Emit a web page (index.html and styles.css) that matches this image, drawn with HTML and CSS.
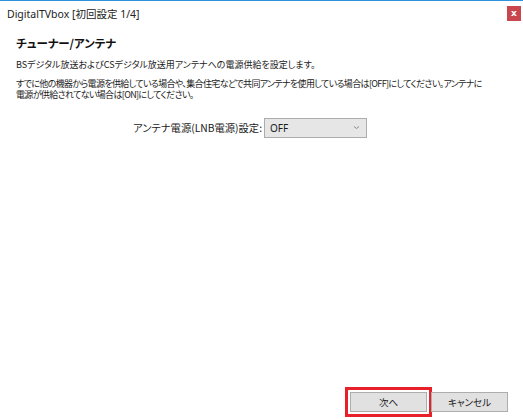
FILE: index.html
```html
<!DOCTYPE html>
<html>
<head>
    <meta charset="utf-8">
    <link rel="stylesheet" href="styles.css">
</head>
<body>
    <div class="window">
        <div class="titlebar">
            <span class="title">DigitalTVbox [初回設定 1/4]</span>
            <span class="close">x</span>
        </div>

        <div class="content">
            <h1 class="heading">チューナー/アンテナ</h1>
            <p class="text">BSデジタル放送およびCSデジタル放送用アンテナへの電源供給を設定します。</p>
            <p class="text text-gap">すでに他の機器から電源を供給している場合や、集合住宅などで共同アンテナを使用している場合は[OFF]にしてください。アンテナに<br>電源が供給されてない場合は[ON]にしてください。</p>

            <div class="setting">
                <label class="setting-label" for="lnb">アンテナ電源(LNB電源)設定:</label>
                <div class="combo" id="lnb">
                    <span>OFF</span>
                    <svg class="chevron" width="7" height="5" viewBox="0 0 7 5">
                        <path d="M1 1.5 L3.5 3.5 L6 1.5" fill="none" stroke="#8a8a8a" stroke-width="1"/>
                    </svg>
                </div>
            </div>
        </div>

        <!-- bottom buttons -->
        <div class="footer">
            <button class="btn btn-marked">次へ</button>
            <button class="btn">キャンセル</button>
        </div>
    </div>
</body>
</html>
```

FILE: styles.css
```css
body {
    margin: 0;
    padding: 0;
    background-color: white;
    font-family: "Noto Sans", "Noto Sans CJK JP", sans-serif;
    color: #1a1a1a;
}

.window {
    width: 523px;
    height: 420px;
    display: flex;
    flex-direction: column;
    box-sizing: border-box;
}

.titlebar {
    height: 25px;
    border-top: 1px solid #2f92dc;
    box-sizing: border-box;
    display: flex;
    align-items: center;
    justify-content: space-between;
    padding-left: 7px;
    padding-right: 2px;
}

.title {
    font-size: 10.5px;
    color: #222;
}

.close {
    width: 14px;
    height: 15px;
    background-color: #c9464f;
    color: white;
    font-size: 9px;
    font-weight: bold;
    line-height: 14px;
    text-align: center;
    font-family: "DejaVu Sans", sans-serif;
}

.content {
    padding-left: 16px;
    padding-right: 12px;
}

.heading {
    margin: 11px 0 0 0;
    font-size: 11.5px;
    line-height: 14px;
    font-weight: bold;
    font-family: "Noto Sans CJK JP", sans-serif;
    font-feature-settings: "palt";
    color: #111;
}

.text {
    margin: 10px 0 0 0;
    font-size: 9px;
    line-height: 10.5px;
    font-family: "Noto Sans CJK JP", sans-serif;
    font-feature-settings: "palt";
    white-space: nowrap;
}

.text-gap {
    margin-top: 7px;
    line-height: 11px;
    letter-spacing: -0.65px;
}

.setting {
    display: flex;
    align-items: center;
    margin-top: 18px;
    padding-left: 114px;
}

.setting-label {
    width: 132px;
    text-align: right;
    font-size: 10.3px;
    font-family: "Noto Sans CJK JP", sans-serif;
    font-feature-settings: "palt";
}

.combo {
    margin-left: 2px;
    width: 103px;
    height: 20px;
    box-sizing: border-box;
    border: 1px solid #acacac;
    background-color: #e6e6e6;
    display: flex;
    align-items: center;
    justify-content: space-between;
    padding: 0 6px 0 5px;
    font-size: 10px;
}

.footer {
    margin-top: auto;
    display: flex;
    justify-content: flex-end;
    gap: 4px;
    padding-right: 15px;
    padding-bottom: 8px;
}

.btn {
    width: 77px;
    height: 20px;
    box-sizing: border-box;
    border: 1px solid #adadad;
    background-color: #e1e1e1;
    font-family: "Noto Sans CJK JP", sans-serif;
    font-feature-settings: "palt";
    font-size: 9.5px;
    color: #1a1a1a;
    padding: 0;
}

.btn-marked {
    outline: 3px solid #e8202a;
    outline-offset: 2px;
}
```
